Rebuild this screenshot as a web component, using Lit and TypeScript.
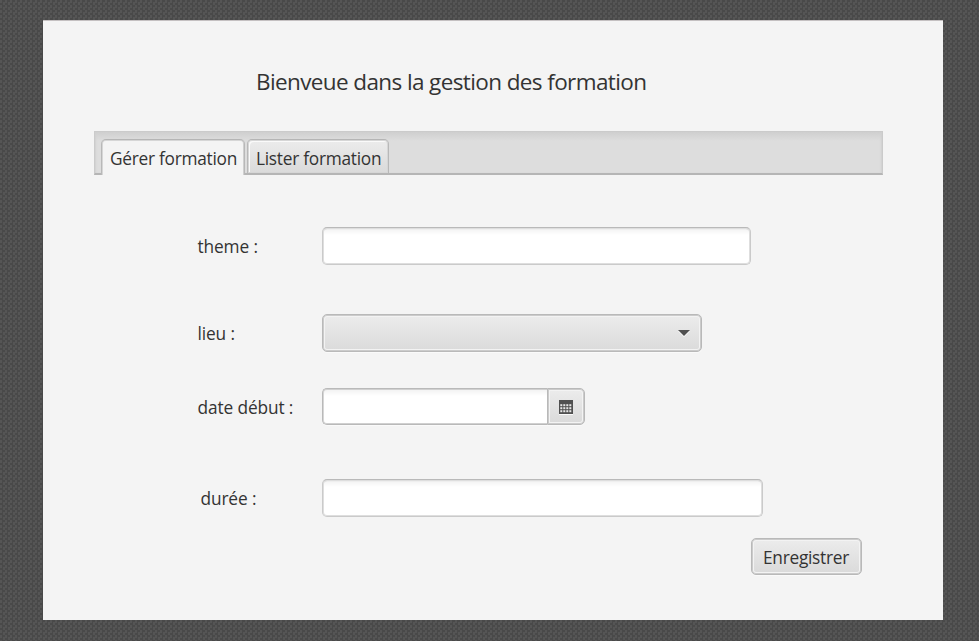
import { LitElement, html, css, svg } from "lit";
import { customElement } from "lit/decorators.js";

@customElement("app-root")
export class AppRoot extends LitElement {
  static styles = css`
    :host {
      display: block;
      box-sizing: border-box;
      width: 979px;
      height: 641px;
      padding: 20px 36px 21px 43px;
      overflow: hidden;
      background: repeating-conic-gradient(#494949 0 25%, #555 0 50%) 0 0 / 5px 5px;
      font: 17.3px/24px "Open Sans", "Noto Sans", sans-serif;
      color: #333;
    }
    * { box-sizing: border-box; }
    .window {
      height: 600px;
      background: #f4f4f4;
      border-top: 1px solid #c4c0c1;
      padding: 44px 0 0 51px;
    }
    h1 {
      margin: 0 0 0 162px;
      height: 34px;
      font-size: 22.5px;
      line-height: 34px;
      font-weight: 400;
      letter-spacing: -0.61px;
      white-space: nowrap;
    }
    .tabs {
      display: flex;
      gap: 2px;
      margin-top: 32px;
      width: 789px;
      height: 44px;
      padding: 7px 0 0 6px;
      border: 1px solid #cbcbcb;
      border-bottom: 2px solid #b5b5b5;
      background: linear-gradient(#cfcfcf, #dddddd 9px);
      box-shadow: inset 2px 0 2px -1px #d0d0d0, inset -2px 0 2px -1px #d0d0d0;
    }
    .tab {
      height: 34px;
      border: 1px solid #b8b8b8;
      border-top-color: #b5b5b5;
      border-radius: 5px 5px 0 0;
      border-bottom: 0;
      background: linear-gradient(#ececec, #dadada);
      box-shadow: inset 0 0 0 1px #d6d6d6, inset 2px 2px #fafafa;
      line-height: 38px;
      padding-left: 8px;
      letter-spacing: -0.26px;
      white-space: nowrap;
      width: 142px;
    }
    .tab.active { height: 36px; width: 144px; background: #f4f4f4; box-shadow: inset 1px 0 #d6d6d6, inset -1px 0 #d0d0d0, inset 0 1px #d6d6d6; }
    .form { display: flex; flex-direction: column; width: 789px; padding-top: 52px; }
    .row { display: flex; align-items: flex-start; height: 38px; }
    .place { margin-top: 49px; }
    .date { margin-top: 36px; }
    .duration { margin-top: 53px; }
    label { padding: 8px 0 0 103.5px; width: 228px; height: 32px; line-height: 24px; letter-spacing: -0.12px; white-space: nowrap; }
    .duration label { padding-left: 106.5px; }
    .input {
      width: 429px;
      height: 38px;
      border: 1px solid #cacaca;
      border-top-color: #b9b9b9;
      border-radius: 5px;
      background: linear-gradient(#f1f1f1, #fff 7px);
      box-shadow: inset 0 0 0 1px #dedede, inset 0 2px 1px -1px #c4c4c4;
    }
    .duration .input { width: 441px; }
    .button {
      height: 38px;
      border: 1px solid #b9b9b9;
      border-radius: 5px;
      background: linear-gradient(#ececec, #dadada);
      box-shadow: inset 0 0 0 1px #cbcbcb, inset 0 0 0 2px #f3f3f3, 0 1px #fafafa;
    }
    .select { width: 380px; display: flex; align-items: center; justify-content: flex-end; padding-right: 11px; }
    .date .input { width: 225px; border-right: 0; border-color: #b9b9b9; border-radius: 5px 0 0 5px; box-shadow: inset 1px 0 #d6d6d6, inset 0 1px #d0d0d0, inset 0 -1px #d0d0d0, 0 1px #fafafa; }
    .calendar { width: 38px; display: flex; align-items: center; justify-content: center; border-radius: 0 5px 5px 0; }
    .date .input, .calendar, .save { height: 37px; }
    .save { align-self: flex-end; width: 111px; margin: 21px 21px 0 0; padding-right: 1px; line-height: 37px; text-align: center; letter-spacing: -0.27px; white-space: nowrap; }
    svg { display: block; }
    .calendar svg { margin: 1px 1px 0 0; }
  `;

  render() {
    return html`
      <main class="window">
        <h1>Bienveue dans la gestion des formation</h1>
        <nav class="tabs">
          <div class="tab active">Gérer formation</div>
          <div class="tab">Lister formation</div>
        </nav>
        <section class="form">
          <div class="row theme"><label>theme :</label><div class="input"></div></div>
          <div class="row place">
            <label>lieu :</label>
            <div class="button select">
              <svg width="12" height="8"><path d="M0 2h12L6 8z" fill="#fff"/><path d="M0 1h12L6 7z" fill="#505050"/></svg>
            </div>
          </div>
          <div class="row date">
            <label>date début :</label><div class="input"></div>
            <div class="button calendar">
              <svg width="14" height="15">
                <path d="M0 14h14v1H0z" fill="#fafafa"/>
                <path d="M0 0h14v14H0z" fill="#505050"/>
                ${[4, 7, 10].map((y) => [1, 4, 7, 10].map((x) => svg`<rect x=${x + 0.3} y=${y + 0.2} width="2" height="2" fill="#e6e6e6"/>`))}
              </svg>
            </div>
          </div>
          <div class="row duration"><label>durée :</label><div class="input"></div></div>
          <div class="button save">Enregistrer</div>
        </section>
      </main>
    `;
  }
}
